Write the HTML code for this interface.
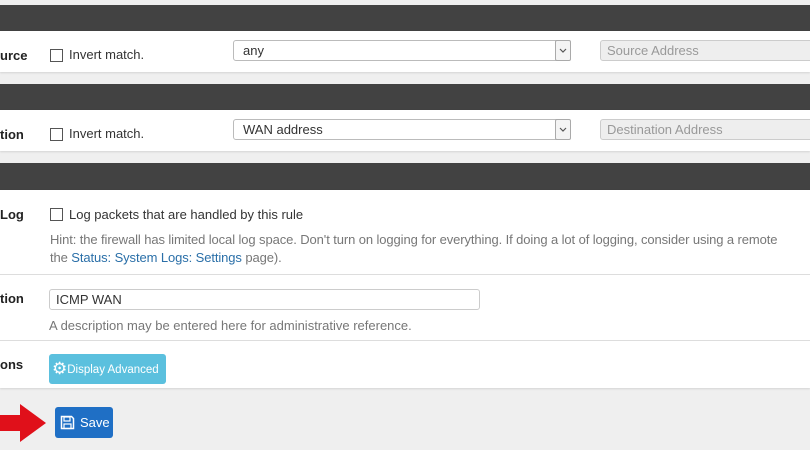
<!DOCTYPE html><html><head><style>
body{margin:0;width:810px;height:450px;background:#efefef;font-family:"Liberation Sans",sans-serif;font-size:13px;color:#333;position:relative;overflow:hidden}
.a{position:absolute}
.bar{position:absolute;left:0;width:810px;background:#424242}
.pan{position:absolute;left:0;width:810px;background:#fff;box-shadow:0 1px 2px rgba(0,0,0,.12)}
.lab{position:absolute;font-weight:bold;font-size:13px;color:#222}
.cb{position:absolute;width:11px;height:11px;border:1px solid #555;background:#fff}
.sel{position:absolute;height:21px;border:1px solid #bbb;border-radius:3px;background:#fff;font-size:13px;line-height:20px;padding-left:9px;box-sizing:border-box}
.sel span.ar{position:absolute;right:-1px;top:-1px;width:16px;height:21px;box-sizing:border-box;border:1px solid #aaa;border-radius:2px;background:#f4f4f4}
.inp{position:absolute;height:21px;border:1px solid #ccc;border-radius:3px;box-sizing:border-box;line-height:19px;padding-left:6px;font-size:13px}
</style></head><body>
<div class="bar" style="top:5px;height:26px"></div>
<div class="pan" style="top:31px;height:41px"></div>
<div class="bar" style="top:84px;height:26px"></div>
<div class="pan" style="top:110px;height:41px"></div>
<div class="bar" style="top:163px;height:27px"></div>
<div class="pan" style="top:190px;height:198px"></div>

<div class="lab" style="left:0;top:48px">urce</div>
<div class="cb" style="left:50px;top:49px"></div><div class="a" style="left:69px;top:47px">Invert match.</div>
<div class="sel" style="left:233px;top:40px;width:338px">any<span class="ar"><svg width="14" height="19"><path d="M4 8l3 3 3-3" fill="none" stroke="#555" stroke-width="1.2"/></svg></span></div>
<div class="inp" style="left:600px;top:40px;width:220px;background:#eee;color:#999">Source Address</div>

<div class="lab" style="left:0;top:127px">tion</div>
<div class="cb" style="left:50px;top:128px"></div><div class="a" style="left:69px;top:126px">Invert match.</div>
<div class="sel" style="left:233px;top:119px;width:338px">WAN address<span class="ar"><svg width="14" height="19"><path d="M4 8l3 3 3-3" fill="none" stroke="#555" stroke-width="1.2"/></svg></span></div>
<div class="inp" style="left:600px;top:119px;width:220px;background:#eee;color:#999">Destination Address</div>

<div class="lab" style="left:0;top:207px">Log</div>
<div class="cb" style="left:50px;top:208px"></div><div class="a" style="left:69px;top:207px">Log packets that are handled by this rule</div>
<div class="a" style="left:50px;top:231px;color:#777;font-size:13px;letter-spacing:-0.1px;white-space:nowrap;line-height:18px">Hint: the firewall has limited local log space. Don't turn on logging for everything. If doing a lot of logging, consider using a remote<br>the <span style="color:#2a6fa8">Status: System Logs: Settings</span> page).</div>
<div class="a" style="left:0;top:274px;width:810px;height:1px;background:#ddd"></div>

<div class="lab" style="left:0;top:291px">tion</div>
<div class="inp" style="left:49px;top:289px;width:431px;background:#fff;color:#333">ICMP WAN</div>
<div class="a" style="left:49px;top:318px;color:#777;font-size:13px">A description may be entered here for administrative reference.</div>
<div class="a" style="left:0;top:340px;width:810px;height:1px;background:#ddd"></div>

<div class="lab" style="left:0;top:357px">ons</div>
<div class="a" style="left:49px;top:354px;width:117px;height:30px;background:#5bc0de;border-radius:3px;color:#fff;font-size:11.5px;line-height:30px;white-space:nowrap"><span style="font-size:17px;margin-left:3px;vertical-align:-1px">&#9881;</span>Display Advanced</div>

<svg class="a" style="left:0;top:402px" width="48" height="42"><polygon points="0,13 20,13 20,2 46,21 20,40 20,29 0,29" fill="#e0101a"/></svg>
<div class="a" style="left:55px;top:407px;width:58px;height:31px;background:#1f6fc5;border-radius:3px;color:#fff;font-size:13px;line-height:31px">
<svg style="position:absolute;left:5px;top:8px" width="15" height="15" viewBox="0 0 15 15"><path d="M1.5 1.5h10l2 2v10h-12z" fill="none" stroke="#fff" stroke-width="1.5"/><rect x="4" y="2" width="6" height="4" fill="none" stroke="#fff" stroke-width="1.2"/><rect x="4" y="9" width="7" height="4.5" fill="none" stroke="#fff" stroke-width="1.2"/></svg>
<span style="position:absolute;left:25px">Save</span></div>
</body></html>
